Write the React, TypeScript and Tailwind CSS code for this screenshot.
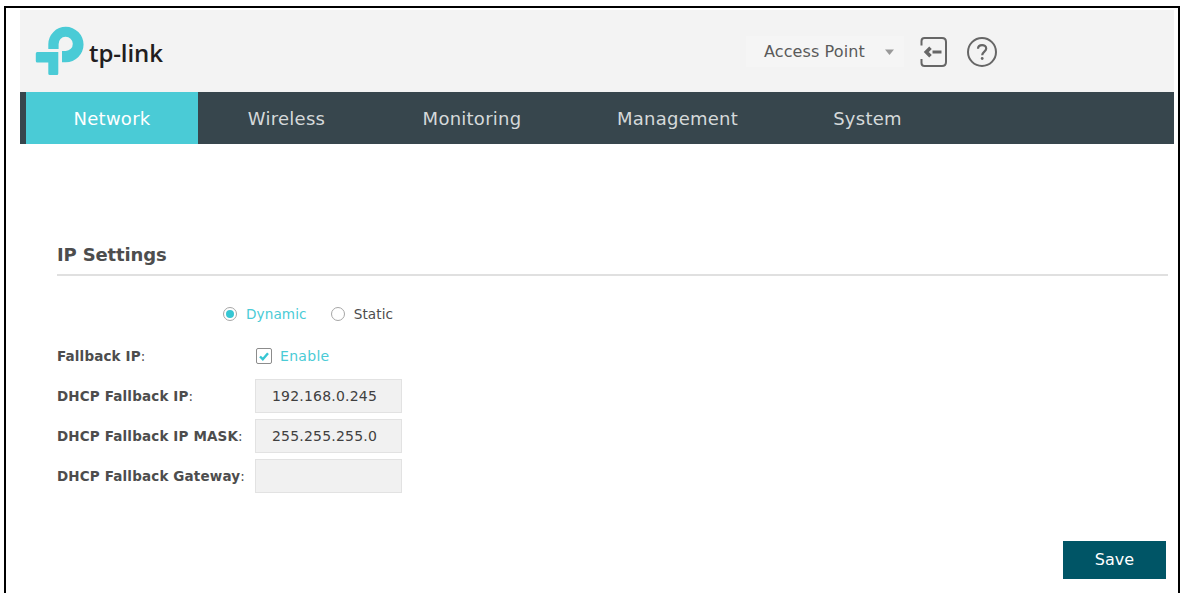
import React, { useState } from 'react';

interface Tab {
  label: string;
  width: string;
}

const TABS: Tab[] = [
  { label: 'Network', width: 'w-[172px]' },
  { label: 'Wireless', width: 'w-[177px]' },
  { label: 'Monitoring', width: 'w-[194px]' },
  { label: 'Management', width: 'w-[217px]' },
  { label: 'System', width: 'w-[163px]' },
];

function Logo() {
  return (
    <div className="flex items-start pt-[16px] pl-[15px]">
      <svg width="49" height="50" viewBox="35 26 49 50" fill="#4acbd6">
        <path d="M48.3 49V44.2A17.5 17.5 0 0 1 65.8 26.8A17.7 17.7 0 0 1 65.8 62.3H62V51H65.8A7.1 7.1 0 1 0 58.6 44.2V49Z" />
        <path d="M37.2 52H58.3V73.5Q58.3 75 56.8 75H49.8Q48.3 75 48.3 73.5V62.5H37.2Q35.8 62.5 35.8 61V53.5Q35.8 52 37.2 52Z" />
      </svg>
      <span className="ml-[5px] mt-[12px] font-['Open_Sans',sans-serif] text-[24px] leading-[30px] font-semibold tracking-[-0.1px] text-[#221e1f]">
        tp-link
      </span>
    </div>
  );
}

function LogoutIcon() {
  return (
    <svg width="28" height="32" viewBox="0 0 28 32" fill="none" stroke="#666" strokeWidth="2">
      <path d="M1.5 9.5V5Q1.5 2 4.5 2H22Q26 2 26 6V26Q26 30 22 30H4.5Q1.5 30 1.5 27V23" />
      <path d="M12.5 16H21.5" strokeWidth="3" />
      <path d="M10.5 11.8L6.3 16L10.5 20.2" strokeWidth="3.6" />
    </svg>
  );
}

function HelpIcon() {
  return (
    <svg width="30" height="30" viewBox="0 0 30 30" fill="none" stroke="#666" strokeWidth="2">
      <circle cx="15" cy="15" r="14" />
      <path d="M11 11.8C11 6.8 19.2 7 19.2 11.6C19.2 14.6 15.2 14.6 15.2 18.3" strokeWidth="2.2" />
      <circle cx="15.2" cy="21.5" r="1.4" fill="#666" stroke="none" />
    </svg>
  );
}

interface RadioProps {
  label: string;
  checked: boolean;
  onSelect: () => void;
}

function Radio({ label, checked, onSelect }: RadioProps) {
  return (
    <button
      type="button"
      onClick={onSelect}
      className={`flex items-center gap-[9px] ${checked ? 'text-[#4acbd6]' : 'text-[#4d4d4d]'}`}
    >
      <span className="flex size-[14px] items-center justify-center rounded-full border border-[#a6a6a6] bg-white">
        {checked && <span className="size-2 rounded-full bg-[#36c6d3]" />}
      </span>
      <span>{label}</span>
    </button>
  );
}

interface FieldProps {
  label: string;
  value: string;
}

function Field({ label, value }: FieldProps) {
  return (
    <div className="flex h-10 items-center">
      <FieldLabel text={label} />
      <div className="flex h-[34px] w-[147px] items-center border border-[#e2e2e2] bg-[#f1f1f1] pl-[16px] text-[14px] tracking-[0.2px] text-[#404040]">
        {value}
      </div>
    </div>
  );
}

function FieldLabel({ text }: { text: string }) {
  return (
    <div className="w-[198px] shrink-0 whitespace-nowrap text-[13.5px] tracking-[0.15px] text-[#4d4d4d]">
      <span className="font-bold">{text}</span>:
    </div>
  );
}

export default function App() {
  const [mode, setMode] = useState('Dynamic');
  const [fallback, setFallback] = useState(true);

  return (
    <div className="h-[593px] w-[1182px] overflow-hidden bg-white pt-[6px] pl-[4px] font-['DejaVu_Sans',sans-serif]">
      <div className="h-[587px] w-[1176px] border-x-2 border-t-2 border-black pt-[2px] pr-[4px] pl-[14px]">
        <header className="flex h-[82px] justify-between bg-[#f3f3f3]">
          <Logo />
          <div className="flex h-[82px] items-center pt-px pr-[177px]">
            <div className="flex h-[31px] w-[158px] items-center bg-[#f5f5f5] pl-[18px] text-[16px] tracking-[0.1px] text-[#5a5a5a]">
              <span>Access Point</span>
              <svg className="mt-px ml-[20px]" width="9" height="6" viewBox="0 0 9 6" fill="#999">
                <path d="M0 0.5H9L4.5 6Z" />
              </svg>
            </div>
            <div className="ml-[16px]">
              <LogoutIcon />
            </div>
            <div className="ml-[19px]">
              <HelpIcon />
            </div>
          </div>
        </header>

        <nav className="flex h-[52px] bg-[#37464d] pl-[6px] text-[18px] tracking-[0.25px]">
          {TABS.map((tab, i) => (
            <a
              key={tab.label}
              className={`flex items-center justify-center ${tab.width} ${
                i === 0 ? 'bg-[#4acbd6] text-white' : 'text-[#d5d9da]'
              }`}
            >
              {tab.label}
            </a>
          ))}
        </nav>

        <main className="pt-[97px] pr-[6px] pl-[37px]">
          <h1 className="h-[35px] border-b-2 border-[#e0e0e0] text-[18px] leading-[28px] font-bold tracking-[-0.15px] text-[#4d4d4d]">
            IP Settings
          </h1>

          <div className="mt-[28px] flex h-5 gap-[24px] pl-[166px] text-[13.6px] tracking-[0.1px]">
            <Radio label="Dynamic" checked={mode === 'Dynamic'} onSelect={() => setMode('Dynamic')} />
            <Radio label="Static" checked={mode === 'Static'} onSelect={() => setMode('Static')} />
          </div>

          <div className="mt-[12px] flex h-10 items-center">
            <FieldLabel text="Fallback IP" />
            <button
              type="button"
              onClick={() => setFallback(!fallback)}
              className="flex items-center gap-[8px] pl-px text-[14px] tracking-[0.3px] text-[#4acbd6]"
            >
              <span className="flex size-4 items-center justify-center rounded-[2px] border border-[#8c8c8c]">
                {fallback && (
                  <svg width="10" height="9" viewBox="0 0 10 9" fill="none" stroke="#36c6d3" strokeWidth="2.4">
                    <path d="M1 4.5L3.8 7.2L9 1.3" />
                  </svg>
                )}
              </span>
              <span>Enable</span>
            </button>
          </div>
          <Field label="DHCP Fallback IP" value="192.168.0.245" />
          <Field label="DHCP Fallback IP MASK" value="255.255.255.0" />
          <Field label="DHCP Fallback Gateway" value="" />

          <div className="mt-[45px] flex justify-end pr-[2px]">
            <button type="button" className="h-[38px] w-[103px] bg-[#005566] text-[16px] text-white">
              Save
            </button>
          </div>
        </main>
      </div>
    </div>
  );
}
